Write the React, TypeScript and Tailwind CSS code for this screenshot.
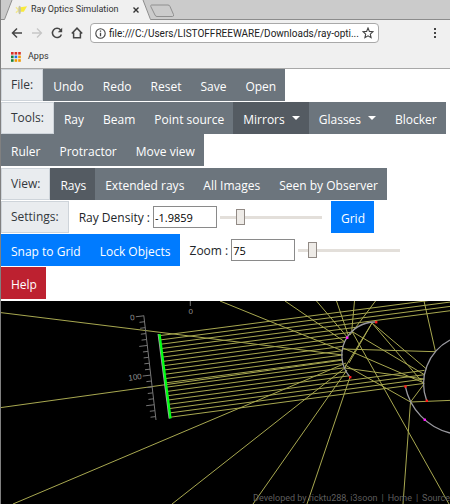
import React, { useState } from 'react';
import clsx from 'clsx';

interface ToolButtonProps {
  label: string;
  tone?: 'gray' | 'blue' | 'red';
  active?: boolean;
  caret?: boolean;
  onClick?: () => void;
}

const tones = {
  gray: 'bg-[#6c757d]',
  blue: 'bg-[#007bff]',
  red: 'bg-[#bd2130]',
};

function ToolButton({ label, tone = 'gray', active, caret, onClick }: ToolButtonProps) {
  return (
    <button
      type="button"
      onClick={onClick}
      className={clsx(
        'flex h-8 items-center pt-1 pr-[9px] pl-[10px] whitespace-nowrap text-white',
        active ? 'bg-[#545b62]' : tones[tone],
      )}
    >
      {label}
      {caret && (
        <span className="mb-1 ml-[7px] border-x-4 border-t-4 border-x-transparent border-t-white" />
      )}
    </button>
  );
}

function GroupLabel({ children }: { children: React.ReactNode }) {
  return (
    <span className="flex h-8 items-center border border-[#ced4da] bg-[#e9ecef] px-[9px] text-[#33383d]">
      {children}
    </span>
  );
}

interface SettingProps {
  id: string;
  label: string;
  value: string;
  min: number;
  max: number;
  step: number;
  onChange: (value: string) => void;
}

function Setting({ id, label, value, min, max, step, onChange }: SettingProps) {
  return (
    <div className="flex h-8 items-center pl-[10px]">
      <label htmlFor={id} className="pt-0.5 pr-[3px] whitespace-nowrap text-[#212529]">
        {label}
      </label>
      <input
        id={id}
        type="text"
        value={value}
        onChange={e => onChange(e.target.value)}
        className="h-[22px] w-16 border border-[#8a8a8a] bg-white pl-px text-[11px] text-black"
      />
      <input
        type="range"
        aria-label={label}
        min={min}
        max={max}
        step={step}
        value={Number(value) || 0}
        onChange={e => onChange(e.target.value)}
        className="ml-[3px] h-4 w-[102px] appearance-none bg-transparent [&::-webkit-slider-runnable-track]:h-[3px] [&::-webkit-slider-runnable-track]:bg-[#e3dfda] [&::-webkit-slider-thumb]:-mt-[7px] [&::-webkit-slider-thumb]:h-4 [&::-webkit-slider-thumb]:w-[9px] [&::-webkit-slider-thumb]:appearance-none [&::-webkit-slider-thumb]:border [&::-webkit-slider-thumb]:border-[#918a85] [&::-webkit-slider-thumb]:bg-[#eeebe7]"
      />
    </div>
  );
}

function AppsIcon() {
  const colors = ['#d93025', '#d93025', '#d93025', '#188038', '#1a73e8', '#f29900', '#188038', '#f29900', '#f29900'];
  return (
    <svg viewBox="0 0 10 10" className="size-[10px]">
      {colors.map((c, i) => (
        <rect key={i} x={(i % 3) * 3.6} y={Math.floor(i / 3) * 3.6} width="2.6" height="2.6" fill={c} />
      ))}
    </svg>
  );
}

function BrowserChrome() {
  return (
    <header className="bg-[#f0f0f0] font-[Roboto,sans-serif] text-[#333]">
      <div className="flex h-5 border-b border-[#8c8c8c] bg-[#cbcbcb]">
        <div className="-mb-px flex h-5">
          <svg viewBox="0 0 12 20" className="h-5 w-3 shrink-0">
            <path d="M3 20 L11 0 H12 V20 Z" fill="#f0f0f0" />
            <path d="M0 19.5 H3.5 L11 0" fill="none" stroke="#8c8c8c" />
          </svg>
          <div className="flex items-center bg-[#f0f0f0]">
            <svg viewBox="0 0 14 12" className="mr-[3px] ml-0.5 h-3 w-[13px]">
              <path d="M4 3.4 L13 2 L9.5 8 L4 8 Z" fill="#f8ea3c" />
              <path d="M1 3 L4 6 L1 9" fill="none" stroke="#f3e98b" strokeWidth="1.5" />
              <ellipse cx="5" cy="6" rx="1.4" ry="4.6" fill="#c4c2a8" />
            </svg>
            <span className="w-[102px] text-[9px] whitespace-nowrap">Ray Optics Simulation</span>
            <button type="button" aria-label="Close tab">
              <svg viewBox="0 0 6 6" className="size-[6px]">
                <path d="M0.5 0.5 L5.5 5.5 M5.5 0.5 L0.5 5.5" stroke="#333" strokeWidth="1.4" />
              </svg>
            </button>
          </div>
          <svg viewBox="0 0 14 20" className="h-5 w-[14px] shrink-0">
            <path d="M0 0 H4 L12 20 H0 Z" fill="#f0f0f0" />
            <path d="M4 0 L11.5 19.5 H14" fill="none" stroke="#8c8c8c" />
          </svg>
        </div>
        <button type="button" aria-label="New tab" className="-ml-1">
          <svg viewBox="0 0 28 16" className="h-4 w-7">
            <path d="M2.5 3 H19 Q20.5 3 21 4.5 L24.5 12.5 Q25 14.5 23.5 14.5 H8 Q6.5 14.5 6 13 L1.8 4.5 Q1.5 3 2.5 3 Z" fill="#cbcbcb" stroke="#8f8f8f" />
          </svg>
        </button>
      </div>

      <div className="flex h-[26px] items-center">
        <button type="button" aria-label="Back" className="ml-[10px]">
          <svg viewBox="0 0 12 12" className="size-3">
            <path d="M11 6 H1.5 M6 1.5 L1.5 6 L6 10.5" fill="none" stroke="#454545" strokeWidth="1.5" />
          </svg>
        </button>
        <button type="button" aria-label="Forward" className="ml-2">
          <svg viewBox="0 0 12 12" className="size-3">
            <path d="M1 6 H10.5 M6 1.5 L10.5 6 L6 10.5" fill="none" stroke="#c6c6c6" strokeWidth="1.3" />
          </svg>
        </button>
        <button type="button" aria-label="Reload" className="ml-2">
          <svg viewBox="0 0 12 12" className="size-3">
            <path d="M9.6 3 A4.6 4.6 0 1 0 10.4 7.4" fill="none" stroke="#454545" strokeWidth="1.5" />
            <path d="M11.2 0.8 V5.2 H6.8 Z" fill="#454545" />
          </svg>
        </button>
        <button type="button" aria-label="Home" className="ml-2">
          <svg viewBox="0 0 12 12" className="size-3">
            <path d="M0.8 6.6 L6 1.2 L11.2 6.6 M2.6 5.6 V10.8 H9.4 V5.6" fill="none" stroke="#454545" strokeWidth="1.5" />
          </svg>
        </button>
        <div className="mr-[54px] ml-[7px] flex h-5 min-w-0 flex-1 items-center rounded-sm border border-[#a9a9a9] bg-white px-1">
          <svg viewBox="0 0 11 11" className="size-[11px] shrink-0">
            <circle cx="5.5" cy="5.5" r="4.7" fill="none" stroke="#444" strokeWidth="1.1" />
            <path d="M5.5 4.8 V8.3 M5.5 2.6 V3.8" stroke="#444" strokeWidth="1.3" />
          </svg>
          <input
            aria-label="Address"
            readOnly
            value="file:///C:/Users/LISTOFFREEWARE/Downloads/ray-opti..."
            className="ml-[3px] min-w-0 flex-1 text-[10px] text-[#222]"
          />
          <button type="button" aria-label="Bookmark">
            <svg viewBox="0 0 12 12" className="size-3">
              <path d="M6 1 L7.4 4.4 L11 4.7 L8.3 7.1 L9.1 10.7 L6 8.8 L2.9 10.7 L3.7 7.1 L1 4.7 L4.6 4.4 Z" fill="none" stroke="#444" strokeWidth="1.1" />
            </svg>
          </button>
        </div>
        <button type="button" aria-label="Menu" className="mr-[13px]">
          <svg viewBox="0 0 4 12" className="h-3 w-1">
            <path d="M1 1 h2 v2 h-2 Z M1 5 h2 v2 h-2 Z M1 9 h2 v2 h-2 Z" fill="#444" />
          </svg>
        </button>
      </div>

      <div className="flex h-[23px] items-center border-b border-[#a8a8a8] pb-px pl-[10px]">
        <a href="#apps" className="flex items-center gap-[7px] text-[9px]">
          <AppsIcon />
          Apps
        </a>
      </div>
    </header>
  );
}

// Twenty parallel rays leave the source, some pass over or under the first mirror
const beam = Array.from({ length: 20 }, (_, i) => {
  const x1 = 160 + i * 0.58;
  const y1 = 335.6 + i * 4.29;
  const at225 = 327 + i * 4.33;
  const slope = -0.13;
  if (i < 4) return [x1, y1, 450, at225 + slope * 225];
  if (i > 15) return [x1, y1, 424.5, at225 + slope * 199.5];
  // walk right until the ray meets the circle of the first mirror
  let x = 330;
  while (x < 376 && Math.hypot(x - 375, at225 + slope * (x - 225) - 355.2) > 33.2) x += 0.25;
  return [x1, y1, x, at225 + slope * (x - 225)];
});

const reflected = [
  [0, 312.5, 343, 355],
  [0, 407.7, 343, 360],
  [13, 504, 346, 363],
  [172, 504, 346, 367],
  [253, 504, 347, 370],
  [307, 504, 350, 377],
  [220, 301, 343, 351],
  [285, 301, 345, 342],
  [316.5, 301, 348, 338],
  [336.5, 301, 348.5, 336],
  [354.5, 301, 351.7, 331.5],
  [375.5, 301, 350, 335],
  [424, 301, 435.5, 351.7],
  [435.5, 351.7, 343, 349],
  [352, 331.5, 449, 504],
  [372, 323, 426.5, 369],
  [372, 323, 424, 384],
  [352, 331.5, 425, 375],
  [343, 348, 424, 383],
  [345, 365, 410.5, 402],
  [345, 368, 424, 379],
  [372, 323, 344.5, 368],
  [372, 323, 349, 363],
  [424, 384, 410.5, 402],
  [410.5, 402, 403, 504],
  [410.5, 402, 450, 400.4],
];

const handles = [
  { x: 376, y: 322, color: '#ff1a1a' },
  { x: 350, y: 377, color: '#ff1a1a' },
  { x: 405.3, y: 386.3, color: '#ff1a1a' },
  { x: 426.6, y: 400.6, color: '#ff1a1a' },
  { x: 347, y: 337.5, color: '#ff1aff' },
  { x: 424.6, y: 419.6, color: '#ff1aff' },
];

function Simulation() {
  return (
    <main className="relative overflow-hidden bg-black">
      <svg viewBox="1 301 449 203" className="block h-auto w-full">
        <g stroke="#a8a850" strokeWidth="1">
          {[...beam, ...reflected].map(([x1, y1, x2, y2], i) => (
            <line key={i} x1={x1} y1={y1} x2={x2} y2={y2} />
          ))}
        </g>
        <g fill="none" stroke="#9a9aa0" strokeWidth="1.3">
          <path d="M376 322 A33.2 33.2 0 0 0 350 377" />
          <path d="M426.7 400.7 A49.2 49.2 0 0 1 450 340" />
          <path d="M405.3 386.3 A60.8 60.8 0 0 0 450 433" />
        </g>
        {handles.map(({ x, y, color }, i) => (
          <rect key={i} x={x - 1} y={y - 1} width="2.4" height="2.4" fill={color} />
        ))}
        <line x1="158.3" y1="334" x2="169.3" y2="418.5" stroke="#a9a0a9" strokeWidth="1.5" />
        <line x1="159.5" y1="334" x2="170.5" y2="418.5" stroke="#00ff14" strokeWidth="2.3" />

        <g stroke="#777" strokeWidth="1">
          <line x1="143.8" y1="315.5" x2="156" y2="420" />
          {Array.from({ length: 18 }, (_, i) => {
            const x = 143.8 + i * 0.69;
            const y = 315.8 + i * 5.93;
            const length = i % 5 === 0 ? 8 : 5;
            return <line key={i} x1={x} y1={y} x2={x - length} y2={y + length * 0.12} />;
          })}
          <line x1="190.3" y1="301" x2="190.3" y2="306" />
        </g>
        <g fill="#929292" fontSize="8" fontFamily="Liberation Sans, sans-serif" textAnchor="end">
          <text x="135" y="320" transform="rotate(-7 135 320)">0</text>
          <text x="142" y="379" transform="rotate(-7 142 379)">100</text>
          <text x="193" y="314">0</text>
        </g>
      </svg>
      <footer className="absolute right-0 bottom-0 flex gap-1 font-[Roboto,sans-serif] text-[9px] leading-[11px] whitespace-nowrap text-[#5e5e5e]">
        <span>Developed by ricktu288, i3soon</span>
        <span>|</span>
        <a href="#home">Home</a>
        <span>|</span>
        <a href="#source">Source</a>
      </footer>
    </main>
  );
}

export default function App() {
  const [density, setDensity] = useState('-1.9859');
  const [zoom, setZoom] = useState('75');
  const [view, setView] = useState('Rays');

  return (
    <div className="overflow-hidden border-l border-[#808080] bg-white font-['Open_Sans','Noto_Sans',sans-serif]">
      <BrowserChrome />

      <div className="flex flex-col gap-px pb-0.5 text-xs">
        <div className="flex flex-wrap">
          <GroupLabel>File:</GroupLabel>
          {['Undo', 'Redo', 'Reset', 'Save', 'Open'].map(name => (
            <ToolButton key={name} label={name} />
          ))}
        </div>

        <div className="flex flex-wrap">
          <GroupLabel>Tools:</GroupLabel>
          <ToolButton label="Ray" />
          <ToolButton label="Beam" />
          <ToolButton label="Point source" />
          <ToolButton label="Mirrors" active caret />
          <ToolButton label="Glasses" caret />
          <ToolButton label="Blocker" />
          <ToolButton label="Ruler" />
          <ToolButton label="Protractor" />
          <ToolButton label="Move view" />
        </div>

        <div className="flex flex-wrap pt-px">
          <GroupLabel>View:</GroupLabel>
          {['Rays', 'Extended rays', 'All Images', 'Seen by Observer'].map(name => (
            <ToolButton key={name} label={name} active={view === name} onClick={() => setView(name)} />
          ))}
        </div>

        <div className="flex flex-wrap gap-y-px">
          <GroupLabel>Settings:</GroupLabel>
          <Setting
            id="density"
            label="Ray Density :"
            value={density}
            min={-3}
            max={3}
            step={0.0001}
            onChange={setDensity}
          />
          <div className="pl-[9px]">
            <ToolButton label="Grid" tone="blue" />
          </div>
          <div className="flex">
            <ToolButton label="Snap to Grid" tone="blue" />
            <ToolButton label="Lock Objects" tone="blue" />
          </div>
          <Setting id="zoom" label="Zoom :" value={zoom} min={25} max={500} step={1} onChange={setZoom} />
        </div>

        <div className="flex">
          <ToolButton label="Help" tone="red" />
        </div>
      </div>

      <Simulation />
    </div>
  );
}
